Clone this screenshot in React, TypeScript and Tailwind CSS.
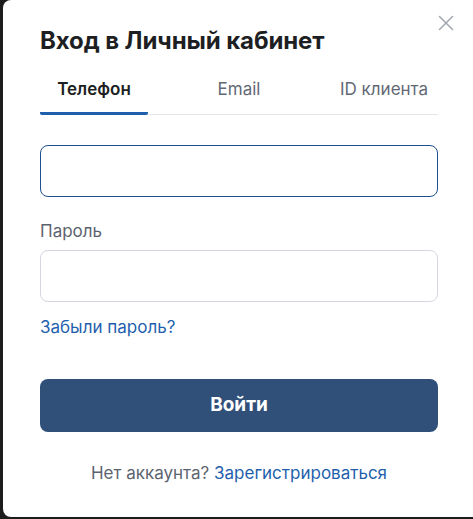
import { X } from 'lucide-react';

export default function App() {
  const font = { fontFamily: 'Inter, "Noto Sans", sans-serif' };
  return (
    <div className="w-[473px] h-[519px] bg-[#1c1c1c] overflow-hidden" style={font}>
      <div className="relative ml-[3px] w-[480px] h-[517px] bg-white rounded-l-lg pl-[37px] pt-[25px]">
        <button className="absolute left-[430px] top-[10px] text-[#a3a8b0]">
          <X size={26} strokeWidth={1.4} />
        </button>
        <h2 className="text-[24px] leading-[32px] font-bold text-[#1d1f23] tracking-[-0.1px]">Вход в Личный кабинет</h2>

        <div className="mt-[20px] w-[398px] flex border-b border-[#e4e6ea] text-[17px] leading-[24px]">
          <div className="w-[108px] text-center pb-[11px] font-semibold text-[#1d1f23] border-b-[3px] border-[#1f5fad] -mb-px rounded-[2px]">Телефон</div>
          <div className="ml-[51px] w-[80px] text-center pb-[11px] text-[#626975]">Email</div>
          <div className="ml-[61px] text-center pb-[11px] text-[#626975]">ID клиента</div>
        </div>

        <input className="mt-[30px] block w-[398px] h-[52px] rounded-lg border border-[#1c4f8f] outline-none px-4" />

        <label className="mt-[22px] block text-[17px] leading-[24px] text-[#5c6370]">Пароль</label>
        <input className="mt-[7px] block w-[398px] h-[52px] rounded-lg border border-[#d4d7e0] outline-none px-4" />

        <a className="mt-[13px] block text-[17px] leading-[24px] text-[#1f5fad]">Забыли пароль?</a>

        <button className="mt-[40px] block w-[398px] h-[53px] rounded-lg bg-[#30507a] text-white text-[19px] font-bold">Войти</button>

        <p className="mt-[29px] w-[398px] text-center text-[17px] leading-[24px] text-[#5c6370]">
          Нет аккаунта? <a className="text-[#1f5fad]">Зарегистрироваться</a>
        </p>
      </div>
    </div>
  );
}
